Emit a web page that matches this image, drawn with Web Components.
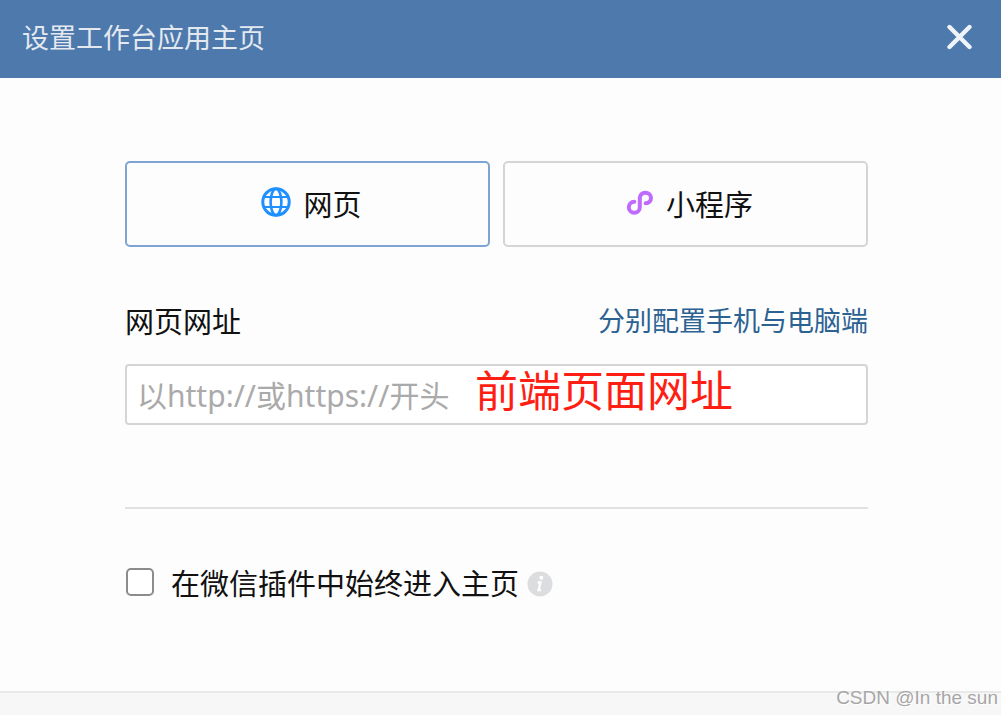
<!DOCTYPE html>
<html lang="zh-CN">
<head>
<meta charset="utf-8">
<title>设置工作台应用主页</title>
<style>
  body { margin: 0; background: #fdfdfd; color: #111; font: 29px/40px "Noto Sans", "Noto Sans CJK SC", sans-serif; }
</style>
</head>
<body>
<app-dialog>
  <span slot="title">设置工作台应用主页</span>
  <choice-group>
    <choice-card selected>
      <svg slot="icon" width="30" height="30" viewBox="0 0 30 30" fill="none" stroke="#1e90ff" stroke-width="3"><circle cx="15" cy="15" r="13.2"/><ellipse cx="15" cy="15" rx="5.4" ry="13.2" stroke-width="2.600"/><path d="M3.500 10h23M3.500 20h23" stroke-width="2"/></svg>
      网页
    </choice-card>
    <choice-card>
      <svg slot="icon" width="28" height="30" viewBox="0 0 28 30" fill="none" stroke="#bf6bff" stroke-width="4" stroke-linecap="round"><path d="M8.3 14.8C5 14.800 2.800 17 2.800 20.200C2.800 23.200 5.300 25.700 8.300 25.700C11.500 25.700 13.800 23.300 13.800 20.200V11.200C13.800 7.900 16.200 5.700 19.300 5.700C22.500 5.700 25 8 25 11.100C25 14.200 22.800 16.200 19.600 16.200"/></svg>
      小程序
    </choice-card>
  </choice-group>
  <url-field placeholder="以http://或https://开头">
    <span slot="label">网页网址</span>
    <span slot="action">分别配置手机与电脑端</span>
    <span slot="note">前端页面网址</span>
  </url-field>
  <check-option>在微信插件中始终进入主页</check-option>
  <span slot="watermark">CSDN @In the sun</span>
</app-dialog>

<script>
  const define = (name, markup, setup) => {
    const template = document.createElement('template');
    template.innerHTML = markup;
    customElements.define(name, class extends HTMLElement {
      constructor() {
        super();
        this.attachShadow({ mode: 'open' }).append(template.content.cloneNode(true));
      }
      connectedCallback() { if (setup) setup(this, this.shadowRoot); }
    });
  };

  define('app-dialog', `
    <style>
      :host { display: flex; flex-direction: column; min-height: 100vh; }
      header { display: flex; align-items: center; justify-content: space-between; box-sizing: border-box; height: 78px; padding: 0 28px 2px 22px; background: #4d79ad; color: #e4e9f0; }
      h1 { margin: 0; font-size: 27px; font-weight: 400; line-height: 40px; }
      button { display: flex; padding: 0; border: 0; background: none; cursor: pointer; }
      main { flex: 1; padding: 83px 133px 40px 125px; }
      footer { box-sizing: border-box; height: 24px; border-top: 2px solid #e9e9e9; background: #f7f7f7; position: relative; }
      .mark { position: absolute; right: 3px; bottom: 6px; color: #a6a6a6; font: 19px/22px "Liberation Sans", sans-serif; text-shadow: 1px 1px #fff; }
    </style>
    <header>
      <h1><slot name="title"></slot></h1>
      <button type="button" aria-label="关闭"><svg width="28" height="28" viewBox="0 0 28 28" fill="none" stroke="#f0f4f8" stroke-width="4.400" stroke-linecap="round"><path d="M4.500 3l20 20M24.500 3l-20 20"/></svg></button>
    </header>
    <main><slot></slot></main>
    <footer><div class="mark"><slot name="watermark"></slot></div></footer>`);

  define('choice-group', `
    <style>:host { display: grid; grid-template-columns: 1fr 1fr; gap: 13px; }</style>
    <slot></slot>`);

  define('choice-card', `
    <style>
      :host { display: block; }
      button { display: flex; align-items: center; justify-content: center; gap: 12px; box-sizing: border-box; width: 100%; height: 86px; padding: 2px 0 0 8px; border: 2px solid #d5d5d5; border-radius: 5px; background: #fdfdfd; color: inherit; font: inherit; cursor: pointer; }
      :host([selected]) button { border-color: #7da4d2; }
      .icon { display: flex; padding-bottom: 6px; }
    </style>
    <button type="button"><span class="icon"><slot name="icon"></slot></span><span><slot></slot></span></button>`,
    (host, root) => root.querySelector('button').setAttribute('aria-pressed', host.hasAttribute('selected')));

  define('url-field', `
    <style>
      :host { display: block; margin-top: 53px; padding-bottom: 82px; border-bottom: 2px solid #e2e2e2; }
      .head { display: flex; justify-content: space-between; align-items: center; height: 44px; }
      a { padding-bottom: 2px; color: #2c6292; font-size: 27px; text-decoration: none; }
      .box { position: relative; margin-top: 20px; }
      input { display: block; box-sizing: border-box; width: 100%; height: 61px; padding: 2px 10px 0; border: 2px solid #d5d5d5; border-radius: 4px; background: #fff; color: inherit; font: inherit; font-size: 30px; outline: 0; }
      input::placeholder { color: #aaa; opacity: 1; }
      .note { position: absolute; left: 350px; top: 0; color: #ff1e14; font-size: 43px; line-height: 54px; pointer-events: none; }
    </style>
    <div class="head"><label for="url"><slot name="label"></slot></label><a href="#"><slot name="action"></slot></a></div>
    <div class="box"><input id="url" type="text"><div class="note"><slot name="note"></slot></div></div>`,
    (host, root) => { root.querySelector('input').placeholder = host.getAttribute('placeholder'); });

  define('check-option', `
    <style>
      :host { display: flex; align-items: center; margin-top: 55px; }
      input { appearance: none; box-sizing: border-box; flex: none; width: 28px; height: 28px; margin: 0 17px 4px 1px; border: 2px solid #8c8c8c; border-radius: 5px; background: #fff; }
      input:checked { background: #4d79ad; }
      svg { margin-left: 8px; }
    </style>
    <input id="always" type="checkbox"><label for="always"><slot></slot></label>
    <svg width="26" height="26" viewBox="0 0 26 26" aria-hidden="true"><circle cx="13" cy="13" r="12.500" fill="#dcdddf"/><circle cx="14.300" cy="6.800" r="2" fill="#fff"/><path d="M10.500 11.500h3l-2 7.500h2.500" fill="none" stroke="#fff" stroke-width="2.300"/></svg>`);
</script>
</body>
</html>
